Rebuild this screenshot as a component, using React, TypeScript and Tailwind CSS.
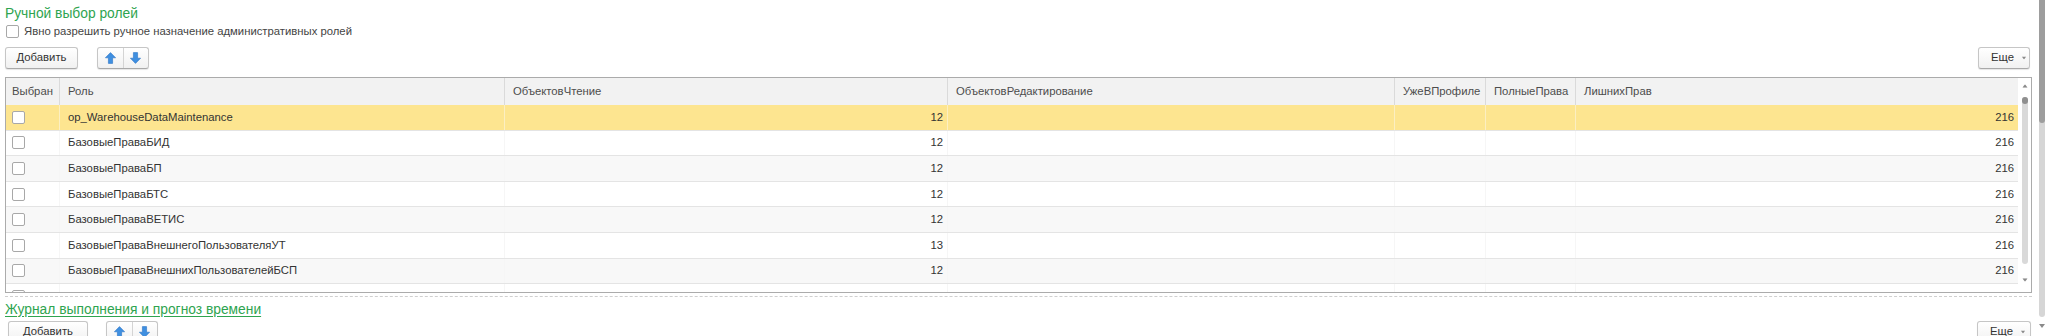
import React from "react";
import clsx from "clsx";

const gridCols = "grid grid-cols-[54px_445px_443px_447px_91px_90px_442px]";

const headers = [
  "Выбран",
  "Роль",
  "ОбъектовЧтение",
  "ОбъектовРедактирование",
  "УжеВПрофиле",
  "ПолныеПрава",
  "ЛишнихПрав",
];

type Role = { role: string; read?: number; extra?: number };

const roles: Role[] = [
  { role: "op_WarehouseDataMaintenance", read: 12, extra: 216 },
  { role: "БазовыеПраваБИД", read: 12, extra: 216 },
  { role: "БазовыеПраваБП", read: 12, extra: 216 },
  { role: "БазовыеПраваБТС", read: 12, extra: 216 },
  { role: "БазовыеПраваВЕТИС", read: 12, extra: 216 },
  { role: "БазовыеПраваВнешнегоПользователяУТ", read: 13, extra: 216 },
  { role: "БазовыеПраваВнешнихПользователейБСП", read: 12, extra: 216 },
  { role: "" },
];

function Checkbox() {
  return <span className="block h-[13px] w-[13px] shrink-0 rounded-[2px] border border-[#a8a8a8] bg-white" />;
}

function Button({ children, className }: { children: React.ReactNode; className?: string }) {
  return (
    <div
      className={clsx(
        "flex h-[22px] items-center justify-center rounded-[3px] border border-[#c6c6c6] border-b-[#a9a9a9] bg-linear-to-b from-white to-[#f1f1f1] text-[11.3px] text-[#333] shadow-[0_1px_1px_rgba(0,0,0,0.1)]",
        className,
      )}
    >
      {children}
    </div>
  );
}

function Arrow({ down }: { down?: boolean }) {
  return (
    <svg width="11" height="12" viewBox="0 0 11 12" className={down ? "rotate-180" : ""}>
      <path d="M5.5 0.6 L10.6 5.8 H7.6 V11.4 H3.4 V5.8 H0.4 Z" fill="#3f8fe0" stroke="#2b74c6" strokeWidth="0.6" />
    </svg>
  );
}

function Tri({ up, className }: { up?: boolean; className?: string }) {
  return (
    <svg width="6" height="4" viewBox="0 0 6 4" className={className}>
      <path d={up ? "M0 4 L3 0 L6 4 Z" : "M0 0 L6 0 L3 4 Z"} fill="#8a8a8a" />
    </svg>
  );
}

function Toolbar({ bottom }: { bottom?: boolean }) {
  return (
    <div className="flex h-[22px] items-center">
      <Button className={bottom ? "ml-[3px] w-[80px]" : "w-[73px]"}>Добавить</Button>
      <div
        className={clsx(
          "flex h-[22px] w-[52px] items-stretch rounded-[3px] border border-[#c6c6c6] border-b-[#a9a9a9] bg-linear-to-b from-white to-[#f1f1f1] shadow-[0_1px_1px_rgba(0,0,0,0.1)]",
          bottom ? "ml-[18px]" : "ml-[19px]",
        )}
      >
        <div className="flex flex-1 items-center justify-center border-r border-[#d4d4d4]">
          <Arrow />
        </div>
        <div className="flex flex-1 items-center justify-center">
          <Arrow down />
        </div>
      </div>
      <Button className={clsx("ml-auto justify-start pl-[12px]", bottom ? "mr-[1px] w-[54px]" : "mr-[2px] w-[52px]")}>
        <span>Еще</span>
        <Tri className="ml-[7px] scale-75" />
      </Button>
    </div>
  );
}

function RoleRow({ r, i }: { r: Role; i: number }) {
  const current = i === 0;
  const bg = current ? "bg-[#fde590]" : i % 2 === 1 ? "bg-white" : "bg-[#f8f8f8]";
  const line = current ? "border-[#fcefc2]" : "border-[#f6f6f6]";
  return (
    <div className={clsx(gridCols, "h-[25.6px] shrink-0 border-b border-b-[#e4e4e4] text-[11.3px] text-[#333]", bg)}>
      <div className={clsx("flex items-center border-r pl-[6px]", line)}>
        <Checkbox />
      </div>
      <div className={clsx("flex items-center truncate border-r pl-[8px]", line)}>{r.role}</div>
      <div className={clsx("flex items-center justify-end border-r pr-[4px]", line)}>{r.read}</div>
      <div className={clsx("border-r", line)} />
      <div className={clsx("border-r", line)} />
      <div className={clsx("border-r", line)} />
      <div className="flex items-center justify-end pr-[4px]">{r.extra}</div>
    </div>
  );
}

export default function App() {
  return (
    <div className="flex h-[336px] w-[2048px] overflow-hidden bg-white font-['Liberation_Sans',Arial,sans-serif]">
      <div className="flex w-[2035px] shrink-0 flex-col pl-[5px] pr-[3px]">
        <div className="mt-[5px] h-[18px] text-[13.8px] leading-[18px] text-[#2ea44f]">Ручной выбор ролей</div>

        <div className="flex h-[21px] items-center pl-[1px]">
          <Checkbox />
          <span className="ml-[5px] text-[11.3px] text-[#444]">Явно разрешить ручное назначение административных ролей</span>
        </div>

        <div className="mt-[7px]">
          <Toolbar />
        </div>

        <div className="mt-[8px] flex h-[216px] shrink-0 overflow-hidden border border-[#ababab]">
          <div className="flex w-[2012px] flex-col">
            <div className={clsx(gridCols, "h-[27px] shrink-0 bg-[#f2f2f2] text-[11.3px] text-[#4d4d4d]")}>
              {headers.map((h, i) => (
                <div
                  key={h}
                  className={clsx(
                    "flex items-center",
                    i === 0 ? "pl-[6px]" : "pl-[8px]",
                    i < headers.length - 1 && "border-r border-[#dadada]",
                  )}
                >
                  {h}
                </div>
              ))}
            </div>
            {roles.map((r, i) => (
              <RoleRow key={i} r={r} i={i} />
            ))}
          </div>
          <div className="flex w-[13px] flex-col items-center bg-white">
            <Tri up className="mt-[6px] scale-90" />
            <div className="mt-[9px] h-[167px] w-[6px] rounded-full bg-[#d9d9d9]">
              <div className="h-[7px] w-[6px] rounded-full bg-[#8f8f8f]" />
            </div>
            <Tri className="mt-[14px] scale-90" />
          </div>
        </div>

        <div className="mt-[3px] border-t border-dashed border-[#cfcfcf]" />

        <div className="mt-[4px] h-[18px] text-[13.8px] leading-[18px] text-[#2ea44f] underline underline-offset-2">
          Журнал выполнения и прогноз времени
        </div>

        <div className="mt-[2px]">
          <Toolbar bottom />
        </div>
      </div>

      <div className="flex w-[13px] flex-col items-center">
        <div className="h-[317px] w-[6px] rounded-b-full bg-[#d6d6d6]">
          <div className="h-[123px] w-[6px] rounded-b-full bg-[#9d9d9d]" />
        </div>
        <Tri className="mt-[7px]" />
      </div>
    </div>
  );
}
